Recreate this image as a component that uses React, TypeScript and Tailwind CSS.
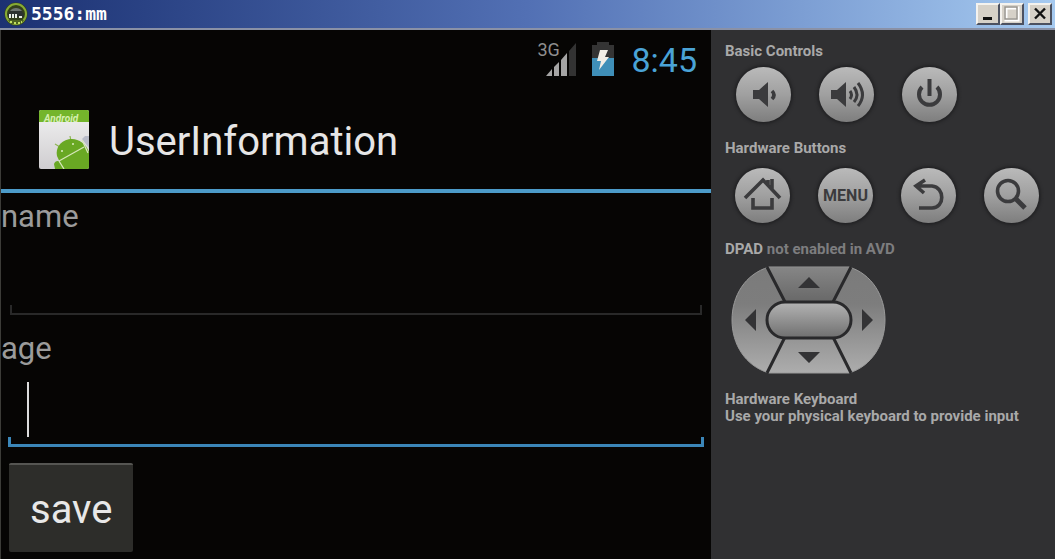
import clsx from 'clsx';
import { type ReactNode } from 'react';

const ICON = '#3b3b3d';

const AvdIcon = () => (
    <svg viewBox="0 0 24 24" className="h-6 w-6" aria-hidden="true">
        <circle cx="12" cy="12" r="11.5" fill="#33401c" />
        <circle cx="12" cy="12" r="10" fill="none" stroke="#86ab35" strokeWidth="2" />
        <path d="M4 15a8 9 0 1 1 16 0z" fill="#2c322f" />
        <path d="M6 9a7 6 0 0 1 12 0z" fill="#6f7671" />
        <path d="M5 12h2v4H5zM8 12h2v4H8zM11 12h2v4h-2zM15 14h3v2h-3z" fill="#e9efe6" />
        <path d="M4 18h16l-3 4H7z" fill="#4d6320" />
        <path d="M6 19h2v2H6zM10 20h2v2h-2zM14 20h2v2h-2zM17 19h1v2h-1z" fill="#c1dd62" />
    </svg>
);

const CaptionButton = ({
    label,
    className,
    children,
}: {
    label: string;
    className?: string;
    children: ReactNode;
}) => (
    <button
        type="button"
        aria-label={label}
        className={clsx(
            'h-[22px] w-6 border-2 border-t-[#f4f2ee] border-r-[#4c5160] border-b-[#4c5160] border-l-[#f4f2ee] bg-[#d6d1c8]',
            className
        )}
    >
        <svg viewBox="0 0 20 18" className="h-full w-full">
            {children}
        </svg>
    </button>
);

const TitleBar = () => (
    <header className="flex h-[30px] items-center border-b-2 border-[#8a91a6] bg-linear-to-r from-[#1c3172] via-[#5270b4] to-[#a6caf0] pr-[3px] pl-1">
        <AvdIcon />
        <h1 className="ml-[3px] flex-1 font-['DejaVu_Sans_Mono',monospace] text-[18px] leading-6 font-bold text-white">
            5556:mm
        </h1>
        <CaptionButton label="Minimize">
            <path d="M5 12h9v3H5z" fill="#111" />
        </CaptionButton>
        <CaptionButton label="Maximize">
            <path d="M4 3h12v12H4z" fill="none" stroke="#fff" strokeWidth="3" />
            <path d="M3 2h12v12H3z" fill="none" stroke="#96928c" strokeWidth="1.5" />
        </CaptionButton>
        <CaptionButton label="Close" className="ml-1">
            <path d="M5 3.5l10 10M15 3.5l-10 10" stroke="#111" strokeWidth="2.4" />
        </CaptionButton>
    </header>
);

const StatusBar = () => (
    <div className="flex h-[58px] items-center justify-end pr-[14px]">
        <div className="relative mr-[14px] h-9 w-10">
            <span className="absolute top-0 left-0 text-[18px] leading-[18px] text-[#8f8f8f]">
                3G
            </span>
            <svg viewBox="0 0 40 36" className="h-full w-full" aria-hidden="true">
                <path d="M9 35L15 28v7z" fill="#a5a5a5" />
                <path d="M17 35v-9l5-5v14z" fill="#a5a5a5" />
                <path d="M24 35V19l6-7v23z" fill="#a5a5a5" />
                <path d="M32 35V10l7-8v33z" fill="#333" />
            </svg>
        </div>
        <svg viewBox="0 0 24 36" className="mr-4 h-9 w-6" aria-hidden="true">
            <path d="M6 1h12v3h5v14H1V4h5z" fill="#343434" />
            <path d="M1 17h22v18H1z" fill="#3f8fb8" />
            <path d="M9 9h8l-3 7h4L8 29l2-9H6z" fill="#f1eee6" />
        </svg>
        <time className="pt-0.5 text-[34px] leading-[56px] text-[#4aa3d6]">8:45</time>
    </div>
);

const LauncherIcon = () => (
    <svg viewBox="0 0 50 59" className="h-[59px] w-[50px]" aria-hidden="true">
        <defs>
            <linearGradient id="card" x1="0" y1="0" x2="0" y2="1">
                <stop offset="0" stopColor="#f2f2f2" />
                <stop offset="1" stopColor="#cfcdd0" />
            </linearGradient>
            <clipPath id="cardClip">
                <rect width="50" height="59" rx="2" />
            </clipPath>
        </defs>
        <g clipPath="url(#cardClip)">
            <rect width="50" height="59" fill="url(#card)" />
            <rect width="50" height="12" fill="#74b52b" />
            <text
                x="5"
                y="12"
                fontSize="10"
                fontStyle="italic"
                fontWeight="700"
                fill="#d6efb0"
            >
                Android
            </text>
            <path d="M32 31L31 26M21 37l-5-3" stroke="#8db552" strokeWidth="1.2" />
            <path d="M43 29l3-3h4v12z" fill="#b9bcc9" />
            <path d="M18 46C16 36 24 29 33 29c7 0 14 5 17 13v17H24z" fill="#69a823" />
            <path d="M15 54c1-3 4-4 6-2l5 7H16z" fill="#69a823" />
            <path d="M20 51L45 37M43 30l6 13M20 51l5 8" stroke="#d5e6b8" strokeWidth="1.3" fill="none" />
            <circle cx="23" cy="41" r="1" fill="#dbeec2" />
            <circle cx="34" cy="34" r="1" fill="#dbeec2" />
        </g>
    </svg>
);

const Field = ({ name, active = false }: { name: string; active?: boolean }) => (
    <div>
        <label htmlFor={name} className="block text-[31px] leading-9 text-[#9b9b9b]">
            {name}
        </label>
        <div className="relative px-[7px]">
            <input
                id={name}
                name={name}
                type="text"
                className="block h-[70px] w-full bg-transparent px-5 text-[31px] text-white outline-none"
            />
            {active && (
                <span className="absolute top-[15px] left-[26px] h-[55px] w-0.5 bg-[#dcdcdc]" />
            )}
            <div
                className={clsx(
                    'h-2.5',
                    active
                        ? 'border-x-3 border-b-3 border-[#3b86b8]'
                        : 'mx-0.5 border-x-2 border-b-2 border-[#292929]'
                )}
            />
        </div>
    </div>
);

const Phone = () => (
    <main className="min-w-0 flex-1 border-l border-[#3c3c38] bg-[#060504]">
        <StatusBar />
        <div className="flex h-[105px] items-center gap-5 border-b-4 border-[#4c9bc9] pt-0.5 pl-[38px]">
            <LauncherIcon />
            <h2 className="pt-1 text-[40px] leading-[48px] text-[#e6e6e6]">UserInformation</h2>
        </div>
        <form className="flex flex-col gap-4 pt-1.5">
            <Field name="name" />
            <Field name="age" active />
            <button
                type="button"
                className="ml-2 h-[89px] self-start rounded-xs border-t-2 border-[#555552] bg-[#2d2d2a] px-[21px] pt-0.5 text-[40px] leading-[48px] text-[#e8e8e8]"
            >
                save
            </button>
        </form>
    </main>
);

const RoundButton = ({ label, children }: { label: string; children: ReactNode }) => (
    <button
        type="button"
        aria-label={label}
        className="flex h-[55px] w-[55px] items-center justify-center rounded-full bg-linear-to-b from-[#bababa] via-[#a0a0a0] to-[#7e7e7e] text-base font-bold text-[#3b3b3d] shadow-[0_0_3px_2px_#222224]"
    >
        {children}
    </button>
);

const Glyph = ({ children }: { children: ReactNode }) => (
    <svg
        viewBox="0 0 55 55"
        className="h-full w-full"
        fill="none"
        stroke={ICON}
        strokeWidth="3.6"
        aria-hidden="true"
    >
        {children}
    </svg>
);

const Dpad = () => (
    <svg viewBox="0 0 155 108" className="ml-[6px] h-[108px] w-[155px]" aria-label="DPAD">
        <defs>
            <linearGradient id="pad" x1="0" y1="0" x2="0" y2="1">
                <stop offset="0" stopColor="#7b7b7b" />
                <stop offset="0.35" stopColor="#7d7d7d" />
                <stop offset="1" stopColor="#adadad" />
            </linearGradient>
            <linearGradient id="padTop" x1="0" y1="0" x2="0" y2="1">
                <stop offset="0" stopColor="#858585" />
                <stop offset="1" stopColor="#686868" />
            </linearGradient>
            <linearGradient id="pill" x1="0" y1="0" x2="0" y2="1">
                <stop offset="0" stopColor="#b4b4b4" />
                <stop offset="1" stopColor="#6f6f6f" />
            </linearGradient>
        </defs>
        <path
            d="M38 1H118C141 8 154 30 154 54C154 78 141 100 118 107H38C14 100 1 78 1 54C1 30 14 8 38 1Z"
            fill="url(#pad)"
            stroke="#9a9a9a"
            strokeWidth="1"
        />
        <path d="M37 2H119L102 36H54Z" fill="url(#padTop)" />
        <path
            d="M36 1L54 36M120 1L102 36M54 71L36 107M102 71L120 107"
            stroke="#29292b"
            strokeWidth="3"
        />
        <rect x="36" y="36" width="84" height="36" rx="18" fill="url(#pill)" stroke="#29292b" strokeWidth="3" />
        <path
            d="M78 11L67 22H89ZM67 86H89L78 97ZM14 54L25 43V65ZM142 54L131 43V65Z"
            fill="#333335"
        />
    </svg>
);

const Heading = ({ children }: { children: ReactNode }) => (
    <h3 className="text-[#a9a9a9]">{children}</h3>
);

const ControlPanel = () => (
    <aside className="w-[344px] shrink-0 bg-[#303032] pt-[13px] pl-[14px] text-[15px] leading-[17px] font-bold">
        <Heading>Basic Controls</Heading>
        <div className="mt-[7px] flex gap-7 pl-[11px]">
            <RoundButton label="Volume down">
                <Glyph>
                    <path d="M17 23h6l9-8v25l-9-8h-6z" fill={ICON} stroke="none" />
                    <path d="M36 24q4 4 0 8" />
                </Glyph>
            </RoundButton>
            <RoundButton label="Volume up">
                <Glyph>
                    <path d="M12 23h6l9-8v25l-9-8h-6z" fill={ICON} stroke="none" />
                    <path d="M31 24q3 4 0 8M35 20q6 8 0 15M39 16q9 12 0 23" strokeWidth="3" />
                </Glyph>
            </RoundButton>
            <RoundButton label="Power">
                <Glyph>
                    <path d="M20 20a10.500 10.500 0 1 0 15 0M27.500 12v17" strokeWidth="4" />
                </Glyph>
            </RoundButton>
        </div>
        <div className="mt-[18px]">
            <Heading>Hardware Buttons</Heading>
        </div>
        <div className="mt-[11px] flex gap-7 pl-[10px]">
            <RoundButton label="Home">
                <Glyph>
                    <path d="M10 30L28 12L45 30M33 17V12M37 21V11M18 30v10h19V30" />
                </Glyph>
            </RoundButton>
            <RoundButton label="Menu">MENU</RoundButton>
            <RoundButton label="Back">
                <Glyph>
                    <path d="M24 12L15 18l8 7M16 18h15c13 1 13 22 0 22H18" />
                </Glyph>
            </RoundButton>
            <RoundButton label="Search">
                <Glyph>
                    <circle cx="24" cy="23" r="10.500" />
                    <path d="M31 30l10 10" strokeWidth="5" />
                </Glyph>
            </RoundButton>
        </div>
        <div className="mt-[18px]">
            <Heading>
                DPAD <span className="text-[#7d7d7f]">not enabled in AVD</span>
            </Heading>
        </div>
        <div className="mt-2 flex">
            <Dpad />
        </div>
        <div className="mt-[17px]">
            <Heading>Hardware Keyboard</Heading>
            <p className="text-[#a9a9a9]">Use your physical keyboard to provide input</p>
        </div>
    </aside>
);

const App = () => (
    <div className="flex min-h-screen flex-col font-[Roboto,sans-serif]">
        <TitleBar />
        <div className="flex flex-1">
            <Phone />
            <ControlPanel />
        </div>
    </div>
);

export default App;
